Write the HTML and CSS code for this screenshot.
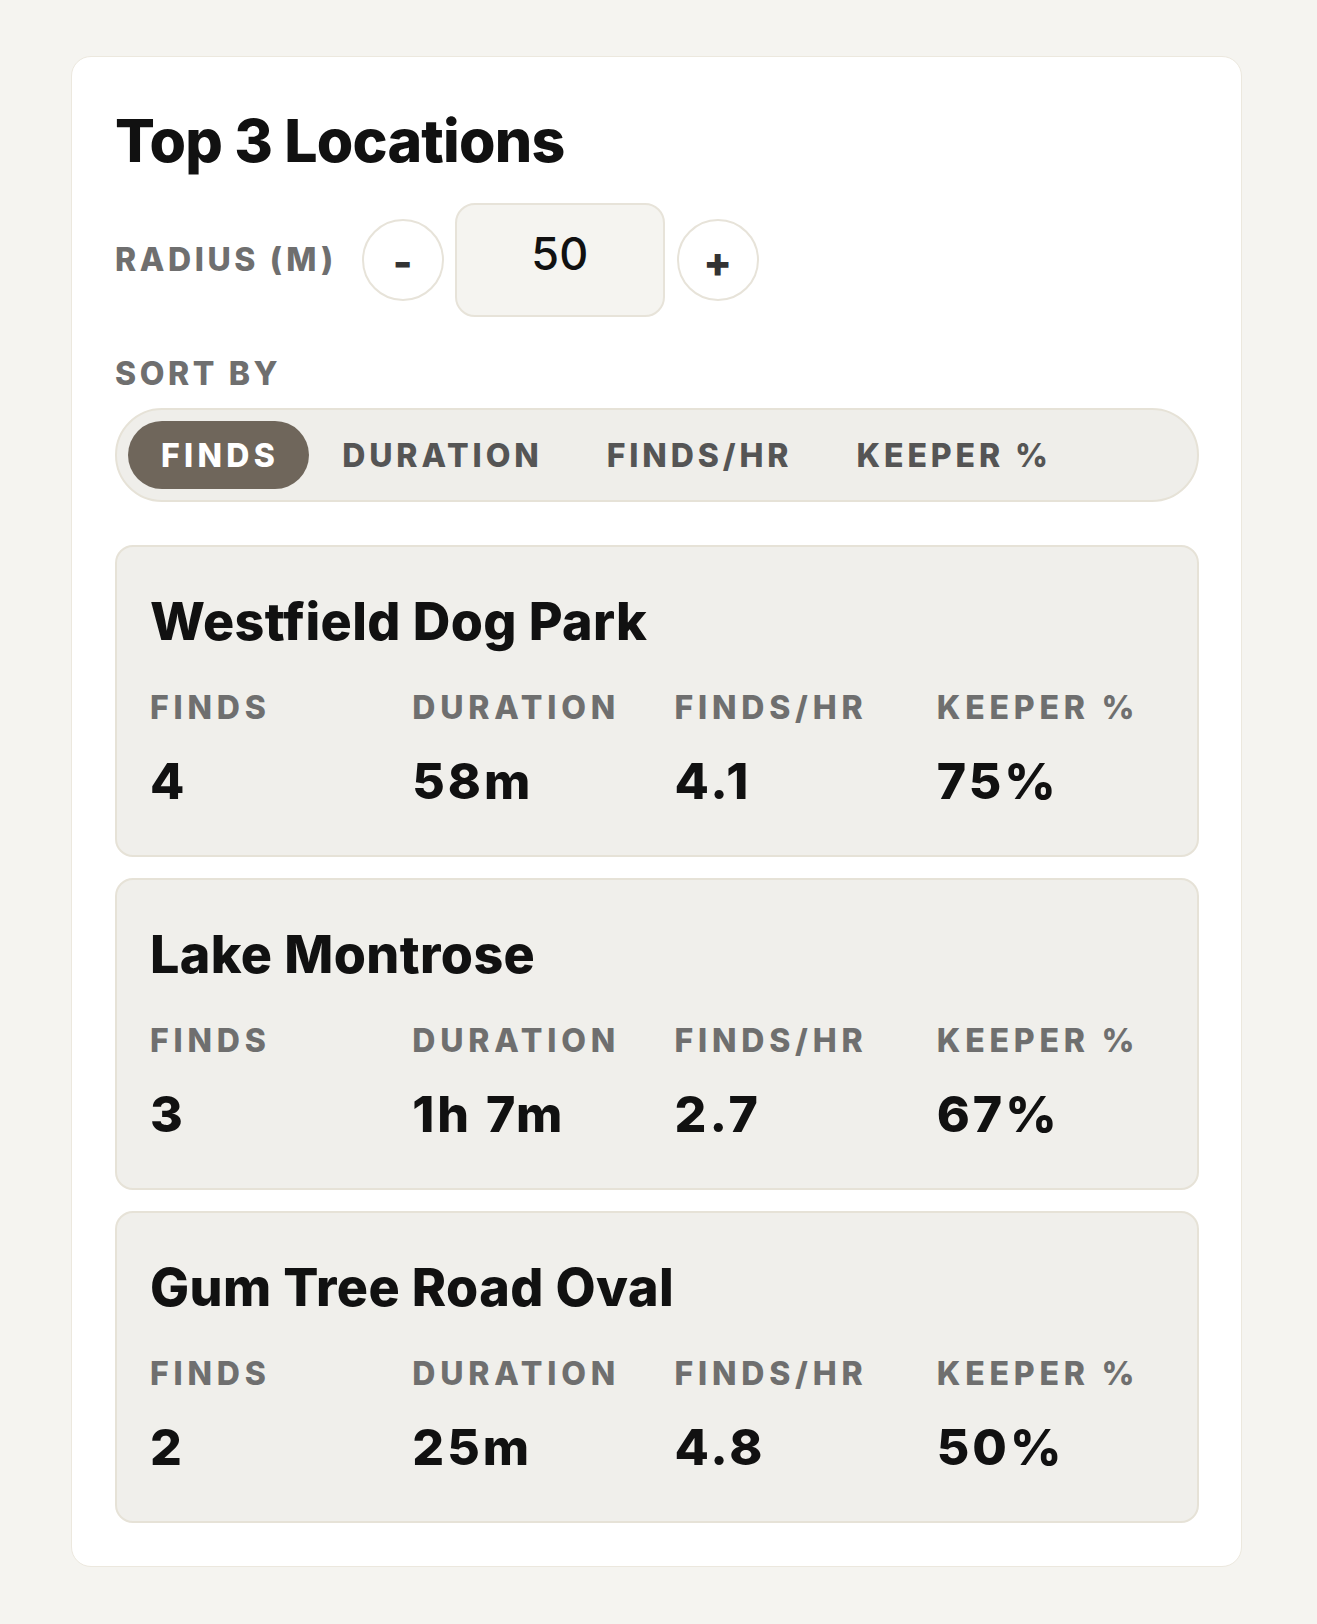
FILE: index.html
```html
<!DOCTYPE html>
<html lang="en">
<head>
<meta charset="utf-8">
<title>Top 3 Locations</title>
<link rel="stylesheet" href="styles.css">
</head>
<body>
<main class="panel">
  <h1 class="panel-title">Top 3 Locations</h1>

  <div class="radius-row">
    <span class="label">RADIUS (M)</span>
    <button class="step-btn" type="button">-</button>
    <div class="radius-input">50</div>
    <button class="step-btn" type="button">+</button>
  </div>

  <div class="label sort-label">SORT BY</div>
  <div class="segmented">
    <span class="seg seg-active">FINDS</span>
    <span class="seg">DURATION</span>
    <span class="seg">FINDS/HR</span>
    <span class="seg">KEEPER %</span>
  </div>

  <section class="loc-list">
    <article class="loc">
      <h2 class="loc-name">Westfield Dog Park</h2>
      <div class="stats">
        <div class="stat"><span class="stat-label">FINDS</span><span class="stat-value">4</span></div>
        <div class="stat"><span class="stat-label">DURATION</span><span class="stat-value">58m</span></div>
        <div class="stat"><span class="stat-label">FINDS/HR</span><span class="stat-value">4.1</span></div>
        <div class="stat"><span class="stat-label">KEEPER %</span><span class="stat-value">75%</span></div>
      </div>
    </article>
    <article class="loc">
      <h2 class="loc-name">Lake Montrose</h2>
      <div class="stats">
        <div class="stat"><span class="stat-label">FINDS</span><span class="stat-value">3</span></div>
        <div class="stat"><span class="stat-label">DURATION</span><span class="stat-value">1h 7m</span></div>
        <div class="stat"><span class="stat-label">FINDS/HR</span><span class="stat-value">2.7</span></div>
        <div class="stat"><span class="stat-label">KEEPER %</span><span class="stat-value">67%</span></div>
      </div>
    </article>
    <article class="loc">
      <h2 class="loc-name">Gum Tree Road Oval</h2>
      <div class="stats">
        <div class="stat"><span class="stat-label">FINDS</span><span class="stat-value">2</span></div>
        <div class="stat"><span class="stat-label">DURATION</span><span class="stat-value">25m</span></div>
        <div class="stat"><span class="stat-label">FINDS/HR</span><span class="stat-value">4.8</span></div>
        <div class="stat"><span class="stat-label">KEEPER %</span><span class="stat-value">50%</span></div>
      </div>
    </article>
  </section>
</main>
</body>
</html>
```

FILE: styles.css
```css
* { box-sizing: border-box; }

html, body {
  margin: 0;
  padding: 0;
  background: #f5f4f0;
}

body {
  font-family: Inter, "Noto Sans", "Liberation Sans", sans-serif;
  color: #111111;
  padding: 56px 75px 60px 71px;
}

.panel {
  width: 1171px;
  background: #ffffff;
  border: 1.5px solid #ece8de;
  border-radius: 20px;
  padding: 48px 42px 43px 43px;
}

.panel-title {
  margin: 0;
  font-size: 59px;
  font-weight: 800;
  line-height: 71px;
  letter-spacing: -0.8px;
  color: #111111;
}

.radius-row {
  display: flex;
  align-items: center;
  margin-top: 27px;
  height: 114px;
}

.label {
  font-size: 32px;
  font-weight: 800;
  letter-spacing: 3.6px;
  color: #6f6f6f;
  line-height: 38px;
}

.radius-row .label {
  margin-right: 25px;
}

.step-btn {
  width: 82px;
  height: 82px;
  border-radius: 50%;
  border: 2px solid #e7e3d9;
  background: #ffffff;
  color: #333333;
  font-family: Inter, "Liberation Sans", sans-serif;
  font-size: 42px;
  font-weight: 800;
  line-height: 1;
  padding: 4px 0 0 0;
  display: flex;
  align-items: center;
  justify-content: center;
}

.radius-input {
  width: 210px;
  height: 114px;
  margin: 0 12px 0 11px;
  border: 2px solid #e7e3d9;
  border-radius: 20px;
  background: #f5f4f0;
  font-family: Inter, "Liberation Sans", sans-serif;
  font-size: 45px;
  font-weight: 500;
  color: #111111;
  display: flex;
  justify-content: center;
  padding-top: 22px;
  line-height: 54px;
}

.sort-label {
  margin-top: 38px;
}

.segmented {
  margin-top: 15px;
  height: 94px;
  border: 2px solid #e6e2d7;
  background: #efeeea;
  border-radius: 47px;
  display: flex;
  align-items: center;
  padding: 0 11px;
}

.seg {
  font-size: 32px;
  font-weight: 800;
  letter-spacing: 3.9px;
  color: #555555;
  padding: 0 31px 0 33px;
  height: 68px;
  display: flex;
  align-items: center;
  border-radius: 34px;
}

.seg-active {
  background: #6f665b;
  color: #ffffff;
  padding: 0 30px 0 33px;
  letter-spacing: 4.3px;
}

.loc-list {
  margin-top: 43px;
  display: flex;
  flex-direction: column;
  gap: 21px;
}

.loc {
  background: #f0efeb;
  border: 2px solid #e6e2d7;
  border-radius: 18px;
  padding: 43px 33px 44px 33px;
}

.loc-name {
  margin: 0;
  font-size: 52px;
  font-weight: 800;
  line-height: 63px;
  letter-spacing: 0.4px;
  color: #111111;
}

.stats {
  margin-top: 36px;
  display: grid;
  grid-template-columns: repeat(4, 1fr);
  column-gap: 35px;
}

.stat {
  display: flex;
  flex-direction: column;
}

.stat-label {
  font-size: 32px;
  font-weight: 800;
  letter-spacing: 4.8px;
  line-height: 38px;
  color: #6f6f6f;
}

.stat-value {
  margin-top: 24px;
  font-size: 50px;
  font-weight: 800;
  line-height: 60px;
  letter-spacing: 3px;
  color: #111111;
}
```
